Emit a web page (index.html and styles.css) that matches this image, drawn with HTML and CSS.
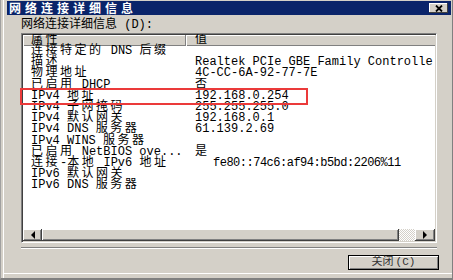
FILE: index.html
```html
<!DOCTYPE html>
<html>
<head>
    <link rel="stylesheet" href="styles.css">
</head>
<body>
    <div class="window">
        <div class="titlebar">
            <span class="title">网络连接详细信息</span>
            <span class="close">
                <svg width="8" height="7" viewBox="0 0 8 7">
                    <path d="M1 0.5 L7 6.5 M7 0.5 L1 6.5" stroke="#000" stroke-width="1.8" fill="none"/>
                </svg>
            </span>
        </div>

        <div class="content">
            <div class="label">网络连接详细信息 (D):</div>

            <div class="list">
                <div class="head">
                    <div class="hcell col1"><span class="zh">属性</span></div>
                    <div class="hcell col2"><span class="zh">值</span></div>
                </div>
                <div class="rows">
                    <div class="row"><div class="prop"><span class="zh">连接特定的</span> DNS <span class="zh">后缀</span></div><div class="val"></div></div>
                    <div class="row"><div class="prop"><span class="zh">描述</span></div><div class="val">Realtek PCIe GBE Family Controlle</div></div>
                    <div class="row"><div class="prop"><span class="zh">物理地址</span></div><div class="val">4C-CC-6A-92-77-7E</div></div>
                    <div class="row"><div class="prop"><span class="zh">已启用</span> DHCP</div><div class="val"><span class="zh">否</span></div></div>
                    <div class="row"><div class="prop">IPv4 <span class="zh">地址</span></div><div class="val">192.168.0.254</div></div>
                    <div class="row"><div class="prop">IPv4 <span class="zh">子网掩码</span></div><div class="val">255.255.255.0</div></div>
                    <div class="row"><div class="prop">IPv4 <span class="zh">默认网关</span></div><div class="val">192.168.0.1</div></div>
                    <div class="row"><div class="prop">IPv4 DNS <span class="zh">服务器</span></div><div class="val">61.139.2.69</div></div>
                    <div class="row"><div class="prop">IPv4 WINS <span class="zh">服务器</span></div><div class="val"></div></div>
                    <div class="row"><div class="prop"><span class="zh">已启用</span> NetBIOS ove...</div><div class="val"><span class="zh">是</span></div></div>
                    <div class="row"><div class="prop"><span class="zh">连接</span>-<span class="zh">本地</span> IPv6 <span class="zh">地址</span></div><div class="val val-wide">fe80::74c6:af94:b5bd:2206%11</div></div>
                    <div class="row"><div class="prop">IPv6 <span class="zh">默认网关</span></div><div class="val"></div></div>
                    <div class="row"><div class="prop">IPv6 DNS <span class="zh">服务器</span></div><div class="val"></div></div>
                </div>
                <div class="hscroll">
                    <div class="sbtn"><span class="arrow-left"></span></div>
                    <div class="thumb"></div>
                    <div class="track"></div>
                    <div class="sbtn sbtn-right"><span class="arrow-right"></span></div>
                </div>
            </div>

            <div class="sep"></div>
            <button class="btn"><span class="zh-btn">关闭</span>(C)</button>
        </div>

        <!-- 红框标注 -->
        <div class="highlight"></div>
    </div>
</body>
</html>
```

FILE: styles.css
```css
body {
    margin: 0;
    background: #d4d0c8;
}
.window {
    position: relative;
    width: 453px;
    height: 280px;
    box-sizing: border-box;
    background: #d4d0c8;
    border-left: 1px solid #a0a0a0;
    border-right: 1px solid #808080;
    border-bottom: 2px solid #808080;
    box-shadow: inset 2px 0 #d4d0c8, inset 3px 0 #fff, inset 0 -4px #d4d0c8, inset 0 -5px #fff;
    display: flex;
    flex-direction: column;
    font-family: "Liberation Mono", "Noto Sans CJK SC", monospace;
    font-size: 12px;
    color: #000;
    overflow: hidden;
}
.titlebar {
    margin: 1px 1px 0 6px;
    height: 14px;
    padding-left: 2px;
    background: #0a246a;
    display: flex;
    align-items: center;
    justify-content: space-between;
}
.title {
    color: #fff;
    font-family: "Noto Sans CJK SC", sans-serif;
    font-weight: bold;
    font-size: 12px;
    letter-spacing: 4px;
    line-height: 14px;
}
.close {
    width: 19px;
    height: 10px;
    margin-right: 3px;
    background: #d4d0c8;
    box-shadow: inset -1px -1px #404040, inset 1px 1px #fff;
    display: flex;
    align-items: center;
    justify-content: center;
}
.content {
    flex: 1;
    display: flex;
    flex-direction: column;
    padding-left: 20px;
}
.label {
    margin-top: 4px;
    line-height: 12px;
    height: 12px;
}
.list {
    margin-top: 2px;
    width: 416px;
    height: 210px;
    box-sizing: border-box;
    padding: 1px;
    border: 1px solid;
    border-color: #808080 #fff #fff #808080;
    box-shadow: inset 1px 1px #404040, inset -1px -1px #d4d0c8;
    background: #fff;
    display: flex;
    flex-direction: column;
    overflow: hidden;
}
.head {
    height: 11px;
    display: flex;
    background: #d4d0c8;
    line-height: 11px;
}
.hcell {
    box-sizing: border-box;
    height: 11px;
    box-shadow: inset 1px 1px #fff, inset 0 -1px #808080;
    white-space: nowrap;
}
.col1 {
    width: 163px;
    padding-left: 8px;
    border-right: 1px solid #808080;
}
.col2 {
    flex: 1;
    padding-left: 9px;
}
.rows {
    flex: 1;
}
.row {
    display: flex;
    height: 11.2px;
    line-height: 11.2px;
    white-space: nowrap;
}
.prop {
    width: 164px;
    box-sizing: border-box;
    padding-left: 8px;
    flex-shrink: 0;
}
.val {
    padding-left: 8px;
}
.val-wide {
    padding-left: 26px;
    letter-spacing: -0.5px;
}
.zh {
    font-size: 12px;
    letter-spacing: 2.5px;
}
.hscroll {
    height: 12px;
    display: flex;
    flex-shrink: 0;
}
.sbtn,
.thumb {
    background: #d4d0c8;
    box-shadow: inset -1px -1px #404040, inset 1px 1px #fff, inset -2px -2px #808080;
}
.sbtn {
    width: 19px;
    display: flex;
    align-items: center;
    justify-content: center;
}
.sbtn-right {
    width: 20px;
}
.thumb {
    width: 357px;
}
.track {
    flex: 1;
    background: repeating-conic-gradient(#fff 0 25%, #d4d0c8 0 50%) 0 0 / 2px 2px;
}
.arrow-left {
    border-right: 4px solid #000;
    border-top: 4px solid transparent;
    border-bottom: 4px solid transparent;
}
.arrow-right {
    border-left: 4px solid #000;
    border-top: 4px solid transparent;
    border-bottom: 4px solid transparent;
}
.sep {
    margin-top: 4px;
    width: 416px;
    border-top: 1px solid #808080;
    border-bottom: 1px solid #fff;
}
.btn {
    align-self: flex-end;
    margin: 6px 13px 0 0;
    width: 91px;
    height: 15px;
    padding: 0;
    border: 1px solid #000;
    background: #d4d0c8;
    box-shadow: inset 1px 1px #fff, inset -1px -1px #808080;
    font-family: "Liberation Mono", "Noto Sans CJK SC", monospace;
    font-size: 11px;
    line-height: 13px;
    color: #333;
}
.zh-btn {
    font-size: 11px;
    margin-right: 2px;
}
.highlight {
    position: absolute;
    left: 19px;
    top: 88px;
    width: 288px;
    height: 17px;
    box-sizing: border-box;
    border: 2px solid #eb3a3a;
}
```
